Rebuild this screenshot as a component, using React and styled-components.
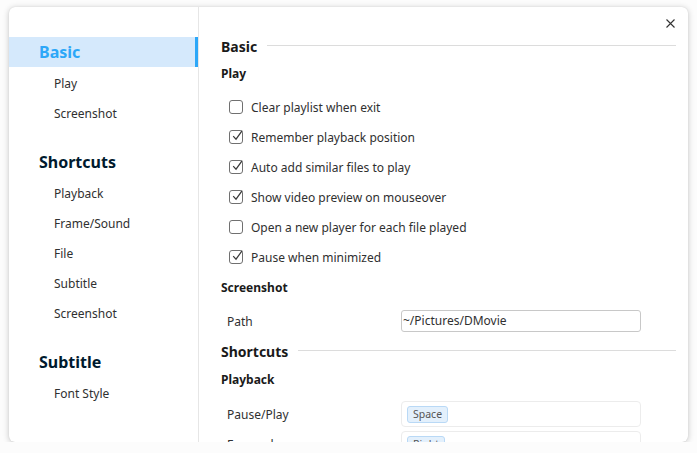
import React from 'react';
import styled, { createGlobalStyle } from 'styled-components';

const GlobalStyle = createGlobalStyle`
    html, body {
        margin: 0;
        padding: 0;
        background: #fcfcfc;
    }
    body {
        font-family: "Noto Sans", "Open Sans", sans-serif;
        color: #303030;
    }
`;

const Window = styled.div`
    position: relative;
    margin: 7px 0 0 9px;
    width: 679px;
    height: 435px;
    display: flex;
    background: #fff;
    border-radius: 6px;
    box-shadow: 0 1px 6px rgba(0,0,0,0.22), 0 0 1px rgba(0,0,0,0.15);
    overflow: hidden;
`;

const Sidebar = styled.nav`
    width: 190px;
    flex-shrink: 0;
    padding-top: 30px;
    border-right: 1px solid #e6e6e6;
    box-sizing: border-box;
`;

const NavGroup = styled.div`
    margin-bottom: 20px;
`;

const NavHeader = styled.div`
    height: 30px;
    line-height: 30px;
    padding-left: 30px;
    font-size: 16px;
    font-weight: 700;
    color: ${p => p.$active ? '#2ca7f8' : '#001a2e'};
    background: ${p => p.$active ? '#d5e9fc' : 'transparent'};
    border-right: 3px solid ${p => p.$active ? '#2ca7f8' : 'transparent'};
`;

const NavItem = styled.div`
    height: 30px;
    box-sizing: border-box;
    padding: 2px 0 0 45px;
    line-height: 30px;
    font-size: 12px;
    color: #303030;
`;

const Content = styled.main`
    flex: 1;
    padding: 24px 12px 0 22px;
    overflow: hidden;
`;

const SectionTitle = styled.div`
    display: flex;
    align-items: center;
    gap: 10px;
    height: 30px;
    font-size: 14px;
    font-weight: 700;
    color: #1a1a1a;

    &::after {
        content: '';
        flex: 1;
        height: 1px;
        margin-top: -2px;
        background: #dcdcdc;
    }
`;

const SubTitle = styled.div`
    height: 24px;
    line-height: 26px;
    margin: ${p => p.$top || 0}px 0 ${p => p.$bottom || 7}px;
    font-size: 12px;
    font-weight: 700;
    color: #1a1a1a;
`;

const CheckRow = styled.label`
    display: flex;
    align-items: center;
    gap: 8px;
    height: 30px;
    padding-left: 8px;
    font-size: 12px;
    color: #303030;
`;

const Box = styled.span`
    position: relative;
    width: 14px;
    height: 14px;
    box-sizing: border-box;
    border: 1px solid #707070;
    border-radius: 3px;
    background: #fff;

    svg {
        position: absolute;
        left: 1px;
        top: -2px;
    }
`;

const FieldRow = styled.div`
    display: flex;
    align-items: center;
    height: 30px;
    padding-left: 6px;
    font-size: 12px;
    color: #303030;
`;

const FieldLabel = styled.span`
    width: 174px;
`;

const TextInput = styled.div`
    width: 240px;
    height: 22px;
    box-sizing: border-box;
    border: 1px solid #c8c8c8;
    border-radius: 3px;
    padding-left: 1px;
    line-height: 20px;
    font-size: 12px;
    color: #303030;
`;

const KeyField = styled.div`
    width: 240px;
    height: 26px;
    box-sizing: border-box;
    border: 1px solid #ececec;
    border-radius: 4px;
    display: flex;
    align-items: center;
    padding-left: 5px;
`;

const KeyChip = styled.span`
    height: 17px;
    line-height: 15px;
    box-sizing: border-box;
    padding: 0 5px;
    border: 1px solid #b9d9f6;
    border-radius: 3px;
    background: #e3f0fc;
    font-size: 10.5px;
    color: #555;
`;

const CloseButton = styled.button`
    position: absolute;
    top: 9px;
    right: 11px;
    width: 14px;
    height: 14px;
    padding: 0;
    border: none;
    background: none;
    display: flex;
    align-items: center;
    justify-content: center;
`;

const Check = () => (
    <svg width="13" height="13" viewBox="0 0 13 13">
        <path d="M2.2 7.2 L5 10.2 L11.2 1.6" fill="none" stroke="#3a3a3a" strokeWidth="1.2" />
    </svg>
);

function Checkbox({ checked, children }) {
    return (
        <CheckRow>
            <Box>{checked && <Check />}</Box>
            {children}
        </CheckRow>
    );
}

const nav = [
    { title: 'Basic', active: true, items: ['Play', 'Screenshot'] },
    { title: 'Shortcuts', items: ['Playback', 'Frame/Sound', 'File', 'Subtitle', 'Screenshot'] },
    { title: 'Subtitle', items: ['Font Style'] },
];

const playOptions = [
    ['Clear playlist when exit', false],
    ['Remember playback position', true],
    ['Auto add similar files to play', true],
    ['Show video preview on mouseover', true],
    ['Open a new player for each file played', false],
    ['Pause when minimized', true],
];

export default function App() {
    return (
        <>
            <GlobalStyle />
            <Window>
                <Sidebar>
                    {nav.map(group => (
                        <NavGroup key={group.title}>
                            <NavHeader $active={group.active}>{group.title}</NavHeader>
                            {group.items.map(item => <NavItem key={item}>{item}</NavItem>)}
                        </NavGroup>
                    ))}
                </Sidebar>

                <Content>
                    <SectionTitle>Basic</SectionTitle>
                    <SubTitle>Play</SubTitle>
                    {playOptions.map(([label, checked]) => (
                        <Checkbox key={label} checked={checked}>{label}</Checkbox>
                    ))}
                    <SubTitle $top={3}>Screenshot</SubTitle>
                    <FieldRow>
                        <FieldLabel>Path</FieldLabel>
                        <TextInput>~/Pictures/DMovie</TextInput>
                    </FieldRow>

                    <SectionTitle>Shortcuts</SectionTitle>
                    <SubTitle $top={1} $bottom={8}>Playback</SubTitle>
                    <FieldRow>
                        <FieldLabel>Pause/Play</FieldLabel>
                        <KeyField><KeyChip>Space</KeyChip></KeyField>
                    </FieldRow>
                    <FieldRow>
                        <FieldLabel>Forward</FieldLabel>
                        <KeyField><KeyChip>Right</KeyChip></KeyField>
                    </FieldRow>
                </Content>

                <CloseButton aria-label="Close">
                    <svg width="9" height="9" viewBox="0 0 9 9">
                        <path d="M0.5 0.5 L8.5 8.5 M8.5 0.5 L0.5 8.5" stroke="#333" strokeWidth="1.1" />
                    </svg>
                </CloseButton>
            </Window>
        </>
    );
}
